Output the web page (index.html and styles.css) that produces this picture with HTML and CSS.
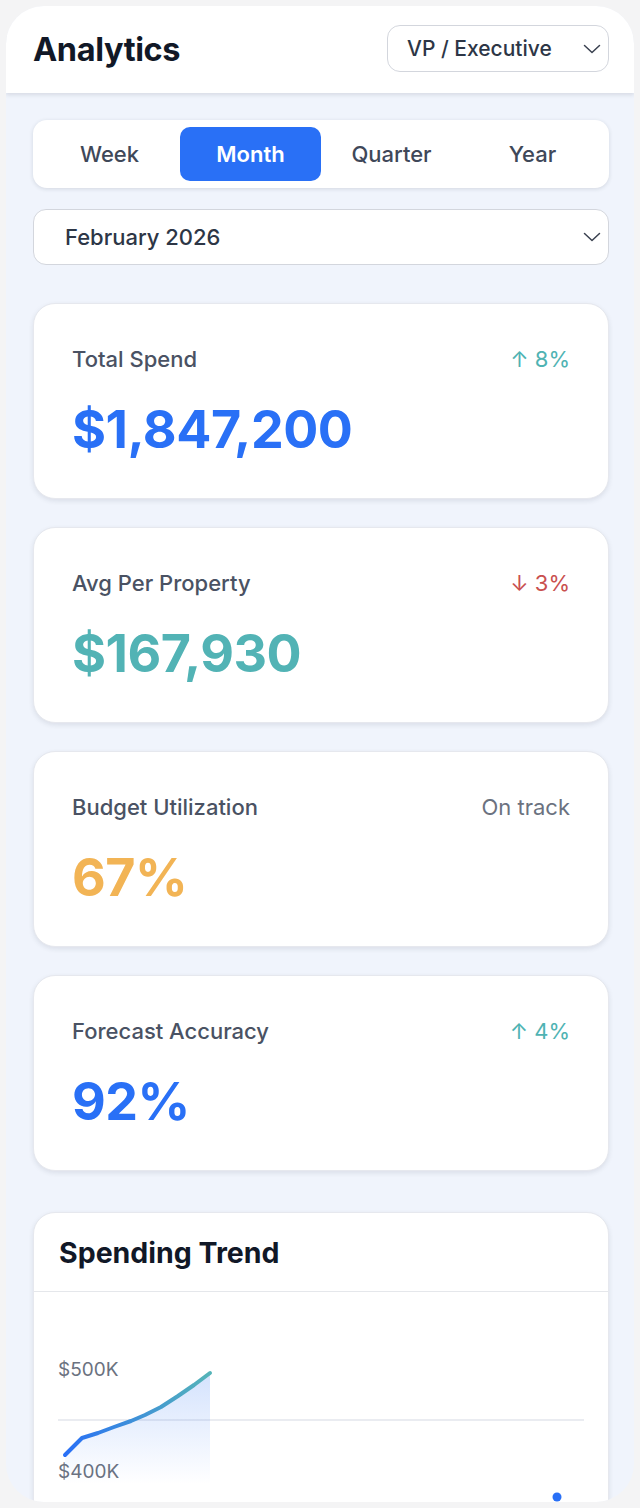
FILE: index.html
```html
<!DOCTYPE html>
<html lang="en">
<head>
<meta charset="utf-8">
<title>Analytics</title>
<link rel="stylesheet" href="styles.css">
</head>
<body>
<div class="frame">
  <header class="topbar">
    <h1 class="title">Analytics</h1>
    <div class="select role-select">
      <span>VP / Executive</span>
      <svg class="chev" width="18" height="10" viewBox="0 0 18 10"><path d="M1.5 1.5 L9 8.5 L16.5 1.5" fill="none" stroke="#3a4150" stroke-width="1.5" stroke-linecap="round" stroke-linejoin="round"/></svg>
    </div>
  </header>

  <main class="content">
    <nav class="tabs">
      <div class="tab">Week</div>
      <div class="tab active">Month</div>
      <div class="tab">Quarter</div>
      <div class="tab">Year</div>
    </nav>

    <div class="select date-select">
      <span>February 2026</span>
      <svg class="chev" width="18" height="10" viewBox="0 0 18 10"><path d="M1.5 1.5 L9 8.5 L16.5 1.5" fill="none" stroke="#3a4150" stroke-width="1.5" stroke-linecap="round" stroke-linejoin="round"/></svg>
    </div>

    <section class="cards">
      <div class="card">
        <div class="card-head"><span class="label">Total Spend</span><span class="delta up">↑ 8%</span></div>
        <div class="value blue">$1,847,200</div>
      </div>
      <div class="card">
        <div class="card-head"><span class="label">Avg Per Property</span><span class="delta down">↓ 3%</span></div>
        <div class="value teal">$167,930</div>
      </div>
      <div class="card">
        <div class="card-head"><span class="label">Budget Utilization</span><span class="delta neutral">On track</span></div>
        <div class="value orange">67%</div>
      </div>
      <div class="card">
        <div class="card-head"><span class="label">Forecast Accuracy</span><span class="delta up">↑ 4%</span></div>
        <div class="value blue">92%</div>
      </div>
    </section>

    <section class="chart-card">
      <h2 class="chart-title">Spending Trend</h2>
      <div class="chart-body">
        <svg class="chart" width="576" height="240" viewBox="0 0 576 240">
          <defs>
            <linearGradient id="lineGrad" x1="32" y1="0" x2="177" y2="0" gradientUnits="userSpaceOnUse">
              <stop offset="0" stop-color="#2970f6"/>
              <stop offset="1" stop-color="#55b4b8"/>
            </linearGradient>
            <linearGradient id="areaGrad" x1="0" y1="81" x2="0" y2="192" gradientUnits="userSpaceOnUse">
              <stop offset="0" stop-color="#2970f6" stop-opacity="0.2"/>
              <stop offset="1" stop-color="#2970f6" stop-opacity="0"/>
            </linearGradient>
          </defs>
          <line x1="25" y1="128" x2="551" y2="128" stroke="#e3e6ec" stroke-width="1.5"/>
          <text x="25" y="84" class="axis">$500K</text>
          <text x="25" y="186" class="axis">$400K</text>
          <polygon points="32,163 49,146 65,141 81,135 98,129 112,123 128,115 145,104 161,93 177,81 177,195 32,195" fill="url(#areaGrad)"/>
          <polyline points="32,163 49,146 65,141 81,135 98,129 112,123 128,115 145,104 161,93 177,81" fill="none" stroke="url(#lineGrad)" stroke-width="4" stroke-linecap="round" stroke-linejoin="round"/>
          <circle cx="524" cy="205" r="4.5" fill="#2970f6"/>
        </svg>
      </div>
    </section>
  </main>
</div>
</body>
</html>
```

FILE: styles.css
```css
* { box-sizing: border-box; }

html, body {
  margin: 0;
  padding: 0;
  background: #f4f4f5;
  font-family: Inter, "Noto Sans", "Liberation Sans", sans-serif;
}

.frame {
  margin: 6px;
  height: 1496px;
  border-radius: 38px;
  overflow: hidden;
  background: #f0f4fc;
}

.topbar {
  height: 87px;
  background: #ffffff;
  display: flex;
  align-items: center;
  justify-content: space-between;
  padding: 0 25px 0 27px;
  box-shadow: 0 2px 4px rgba(30, 40, 60, 0.12);
  position: relative;
}

.title {
  margin: 0;
  font-size: 32.5px;
  font-weight: 700;
  color: #111827;
  letter-spacing: -0.4px;
}

.select {
  display: flex;
  align-items: center;
  justify-content: space-between;
  background: #ffffff;
  border: 1px solid #d3d6dd;
  color: #2d3646;
  font-weight: 500;
}

.role-select {
  width: 222px;
  height: 47px;
  border-radius: 13px;
  padding: 0 7px 0 19px;
  margin-top: -2px;
  font-size: 21px;
}

.chev { display: block; }

.content {
  padding: 27px 25px 0 27px;
}

.tabs {
  display: flex;
  background: #ffffff;
  border-radius: 14px;
  padding: 7px 6px;
  box-shadow: 0 1px 4px rgba(30, 40, 60, 0.14);
}

.tab {
  flex: 1;
  height: 54px;
  display: flex;
  align-items: center;
  justify-content: center;
  font-size: 22px;
  font-weight: 500;
  color: #3f4859;
  border-radius: 10px;
}

.tab.active {
  background: #2970f6;
  color: #ffffff;
  font-weight: 600;
}

.date-select {
  margin-top: 21px;
  height: 56px;
  border-radius: 13px;
  padding: 0 7px 0 31px;
  font-size: 22px;
}

.cards {
  margin-top: 38px;
  display: flex;
  flex-direction: column;
  gap: 28px;
}

.card {
  height: 196px;
  background: #ffffff;
  border-radius: 22px;
  border: 1px solid #e6e8ee;
  box-shadow: 0 2px 5px rgba(30, 40, 60, 0.1);
  padding: 41px 38px 0 38px;
}

.card-head {
  display: flex;
  justify-content: space-between;
  align-items: center;
  height: 28px;
}

.label {
  font-size: 22px;
  font-weight: 500;
  color: #4a5263;
}

.delta {
  font-size: 22px;
  font-weight: 400;
}
.delta.up { color: #4fb3b3; }
.delta.down { color: #c9504f; }
.delta.neutral { color: #6b7280; }

.value {
  margin-top: 27px;
  font-size: 52px;
  line-height: 60px;
  font-weight: 700;
  letter-spacing: -0.5px;
}
.value.blue { color: #2970f6; }
.value.teal { color: #52b3b5; }
.value.orange { color: #f2b455; }

.chart-card {
  margin-top: 41px;
  background: #ffffff;
  border-radius: 22px;
  border: 1px solid #e6e8ee;
  box-shadow: 0 2px 5px rgba(30, 40, 60, 0.1);
}

.chart-title {
  margin: 0;
  height: 79px;
  display: flex;
  align-items: center;
  padding: 0 25px;
  font-size: 28.5px;
  font-weight: 700;
  color: #111827;
  border-bottom: 1.5px solid #e5e7eb;
}

.chart-body {
  height: 260px;
}

.chart { display: block; margin-left: -1px; }

.axis {
  font-family: Inter, "Noto Sans", sans-serif;
  font-size: 19px;
  fill: #6b7280;
}
```
